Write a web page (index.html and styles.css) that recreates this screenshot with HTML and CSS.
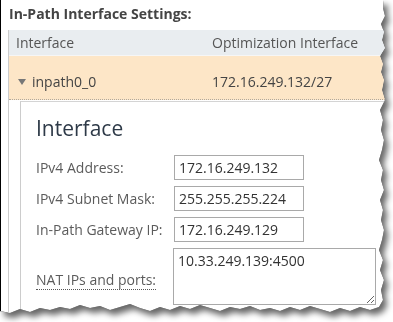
FILE: index.html
```html
<!DOCTYPE html>
<html lang="en">
<head>
  <meta charset="UTF-8">
  <meta name="viewport" content="width=device-width, initial-scale=1.0">
  <title>In-Path Interface Settings</title>
  <link rel="stylesheet" href="styles.css">
</head>
<body>
  <div class="shot">
    <div class="paper">
      <h2 class="title">In-Path Interface Settings:</h2>
      <div class="table">
        <div class="thead">
          <span>Interface</span>
          <span>Optimization Interface</span>
        </div>
        <div class="row open">
          <span><span class="caret"></span>inpath0_0</span>
          <span>172.16.249.132/27</span>
        </div>
        <div class="detail">
          <h3>Interface</h3>
          <div class="field">
            <div class="label">IPv4 Address:</div>
            <input class="text" type="text" value="172.16.249.132">
          </div>
          <div class="field">
            <div class="label">IPv4 Subnet Mask:</div>
            <input class="text" type="text" value="255.255.255.224">
          </div>
          <div class="field">
            <div class="label">In-Path Gateway IP:</div>
            <input class="text" type="text" value="172.16.249.129">
          </div>
          <div class="field field-tall">
            <div class="label"><span class="hint">NAT IPs and ports:</span></div>
            <textarea class="area">10.33.249.139:4500</textarea>
          </div>
        </div>
      </div>
    </div>
  </div>
</body>
</html>
```

FILE: styles.css
```css
body {
  margin: 0;
  width: 393px;
  height: 322px;
  overflow: hidden;
  background-color: #fff;
  font-family: 'Open Sans', 'Noto Sans', sans-serif;
  font-size: 14px;
  color: #444;
}
.shot {
  width: 393px;
  height: 322px;
  filter: drop-shadow(0 0 0.7px #000) drop-shadow(4px 5px 3px rgba(0,0,0,0.6));
}
.paper {
  box-sizing: border-box;
  width: 386px;
  height: 316px;
  overflow: hidden;
  background-color: #fff;
  border-left: 1px solid #000;
  padding: 5px 0 0 7px;
  clip-path: polygon(0 0, 384px 0, 383px 8px, 385px 16px, 381px 24px, 384px 32px, 382px 40px, 385px 48px, 380px 56px, 383px 64px, 381px 72px, 384px 80px, 382px 90px, 385px 100px, 380px 110px, 383px 120px, 381px 130px, 384px 140px, 382px 150px, 379px 160px, 383px 170px, 381px 180px, 384px 190px, 380px 200px, 383px 210px, 381px 220px, 384px 230px, 382px 240px, 379px 250px, 383px 260px, 380px 270px, 384px 280px, 381px 290px, 383px 300px, 379px 307px, 370px 310px, 360px 307px, 350px 311px, 340px 308px, 330px 312px, 320px 309px, 310px 306px, 300px 310px, 290px 307px, 280px 311px, 270px 308px, 260px 310px, 250px 306px, 240px 309px, 230px 307px, 220px 311px, 210px 308px, 200px 305px, 190px 309px, 180px 306px, 170px 310px, 160px 307px, 150px 311px, 140px 308px, 130px 304px, 120px 307px, 110px 310px, 100px 306px, 90px 308px, 80px 305px, 70px 309px, 60px 307px, 50px 310px, 40px 308px, 30px 312px, 20px 309px, 10px 313px, 0 311px);
}
.title {
  margin: 0;
  padding-left: 1px;
  font-size: 14px;
  line-height: 18px;
  font-weight: bold;
  color: #444;
}
.table {
  width: 400px;
  margin-top: 7px;
  border-left: 1px solid #ccc;
}
.thead,
.row {
  display: grid;
  grid-template-columns: 196px 1fr;
  padding-left: 7px;
}
.thead {
  height: 25px;
  line-height: 25px;
  background-color: #e9edf0;
  border-bottom: 1px solid #f6f6f6;
  color: #555;
}
.row {
  padding-top: 16px;
  padding-bottom: 8px;
  line-height: 19px;
  background-color: #fde6c7;
  border-bottom: 1px dotted #b0a89c;
}
.caret {
  display: inline-block;
  width: 0;
  height: 0;
  margin: 0 6px 2px 2px;
  border-left: 4px solid transparent;
  border-right: 4px solid transparent;
  border-top: 6px solid #777;
}
.detail {
  margin: 1px 0 0 11px;
  padding: 12px 0 0 15px;
  height: 220px;
  border-top: 1px solid #d4d4d4;
  border-left: 1px solid #ccc;
}
.detail h3 {
  margin: 0 0 13px;
  font-size: 21px;
  line-height: 28px;
  font-weight: normal;
  color: #2e3a48;
}
.field {
  display: flex;
  align-items: center;
  margin-bottom: 6px;
}
.label {
  width: 138px;
  flex-shrink: 0;
  color: #5b5b5b;
  line-height: 19px;
}
.text,
.area {
  box-sizing: border-box;
  margin: 0;
  border: 1px solid #a9a9a9;
  border-radius: 0;
  font-family: 'Open Sans', 'Noto Sans', sans-serif;
  font-size: 14px;
  line-height: 19px;
  color: #333;
  background-color: #fff;
}
.text {
  width: 130px;
  height: 25px;
  padding: 0 4px;
}
.area {
  width: 203px;
  height: 57px;
  padding: 2px 4px;
  margin-left: -1px;
  resize: both;
}
.field-tall {
  align-items: flex-end;
}
.field-tall .label {
  margin-bottom: 16px;
}
.hint {
  border-bottom: 1px dotted #555;
}
```
